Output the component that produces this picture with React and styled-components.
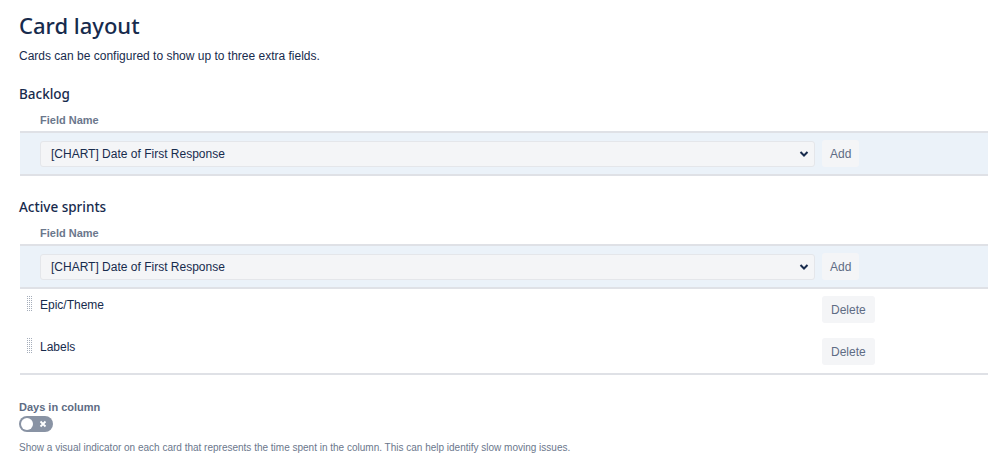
import styled, { createGlobalStyle } from 'styled-components';

const GlobalStyle = createGlobalStyle`
  body {
    margin: 0;
    background: #ffffff;
    font-family: "Liberation Sans", Arial, sans-serif;
    color: #172b4d;
  }
`;

const Page = styled.div`
  padding: 11px 11px 0 19px;
  width: 999px;
  box-sizing: border-box;
`;

const Title = styled.h1`
  margin: 0;
  font-family: "Noto Sans", "Liberation Sans", sans-serif;
  font-size: 22px;
  font-weight: 500;
  line-height: 28px;
  color: #172b4d;
`;

const Intro = styled.p`
  margin: 9px 0 0;
  font-size: 12px;
  line-height: 16px;
  color: #172b4d;
`;

const SectionTitle = styled.h2`
  margin: ${(p) => p.$top}px 0 0;
  font-family: "Noto Sans", "Liberation Sans", sans-serif;
  font-size: 13.5px;
  font-weight: 500;
  line-height: 18px;
  color: #172b4d;
`;

const ColumnHead = styled.div`
  margin: 10px 0 0 21px;
  font-size: 11px;
  font-weight: 700;
  line-height: 14px;
  color: #6b778c;
`;

const Table = styled.div`
  margin: 4px 0 0 1px;
  border-bottom: ${(p) => (p.$closed ? '2px solid #dfe1e6' : 'none')};
`;

const AddRow = styled.div`
  display: flex;
  align-items: center;
  gap: 7px;
  height: 41px;
  padding: 0 20px;
  background: #ebf2f9;
  border-top: 2px solid #dfe1e6;
  border-bottom: 2px solid #dfe1e6;
`;

const SelectBox = styled.div`
  position: relative;
  width: 775px;
  height: 26px;
  box-sizing: border-box;
  display: flex;
  align-items: center;
  padding: 0 10px;
  background: #f4f5f7;
  border: 1px solid #e4e6ea;
  border-radius: 3px;
  font-size: 12px;
  color: #172b4d;
`;

const Chevron = styled.svg`
  position: absolute;
  right: 5px;
  top: 8px;
`;

const Button = styled.button`
  height: 27px;
  padding: 0 ${(p) => p.$pad}px;
  border: none;
  border-radius: 3px;
  background: #f4f5f7;
  font-family: inherit;
  font-size: 12px;
  color: #5e6c84;
  cursor: pointer;
`;

const FieldRow = styled.div`
  display: flex;
  align-items: flex-start;
  height: 42px;
  padding: 7px 0 0 7px;
  box-sizing: border-box;
`;

const Handle = styled.svg`
  flex: none;
`;

const FieldName = styled.div`
  margin-left: 7px;
  width: 782px;
  font-size: 12px;
  line-height: 16px;
  padding-top: 1px;
  color: #172b4d;
`;

const Setting = styled.div`
  margin-top: 25px;
`;

const SettingLabel = styled.div`
  font-size: 11px;
  font-weight: 700;
  line-height: 14px;
  color: #5e6c84;
`;

const Toggle = styled.div`
  position: relative;
  margin-top: 2px;
  width: 34px;
  height: 16px;
  border-radius: 8px;
  background: #8993a4;
`;

const Knob = styled.div`
  position: absolute;
  left: 2px;
  top: 2px;
  width: 12px;
  height: 12px;
  border-radius: 50%;
  background: #ffffff;
`;

const Cross = styled.svg`
  position: absolute;
  right: 6px;
  top: 4px;
`;

const Hint = styled.p`
  margin: 9px 0 0;
  font-size: 10px;
  line-height: 14px;
  color: #6b778c;
`;

function FieldSelect() {
  return (
    <AddRow>
      <SelectBox>
        [CHART] Date of First Response
        <Chevron width="10" height="8" viewBox="0 0 10 8">
          <path d="M1.5 2 L5 5.5 L8.5 2" fill="none" stroke="#172b4d" strokeWidth="2" />
        </Chevron>
      </SelectBox>
      <Button $pad={8}>Add</Button>
    </AddRow>
  );
}

const dots = [];
for (let r = 0; r < 8; r++) {
  for (let c = 0; c < 3; c++) dots.push([c * 2, r * 2]);
}

function Field({ name }) {
  return (
    <FieldRow>
      <Handle width="6" height="16" viewBox="0 0 6 16">
        {dots.map(([x, y]) => (
          <rect key={`${x}-${y}`} x={x} y={y} width="1" height="1" fill="#a5adba" />
        ))}
      </Handle>
      <FieldName>{name}</FieldName>
      <Button $pad={9}>Delete</Button>
    </FieldRow>
  );
}

export default function App() {
  return (
    <Page>
      <GlobalStyle />
      <Title>Card layout</Title>
      <Intro>Cards can be configured to show up to three extra fields.</Intro>

      <SectionTitle $top={21}>Backlog</SectionTitle>
      <ColumnHead>Field Name</ColumnHead>
      <Table>
        <FieldSelect />
      </Table>

      <SectionTitle $top={22}>Active sprints</SectionTitle>
      <ColumnHead>Field Name</ColumnHead>
      <Table $closed>
        <FieldSelect />
        <Field name="Epic/Theme" />
        <Field name="Labels" />
      </Table>

      <Setting>
        <SettingLabel>Days in column</SettingLabel>
        <Toggle>
          <Knob />
          <Cross width="8" height="8" viewBox="0 0 8 8">
            <path d="M1.5 1.5 L6.5 6.5 M6.5 1.5 L1.5 6.5" stroke="#ffffff" strokeWidth="1.8" />
          </Cross>
        </Toggle>
        <Hint>
          Show a visual indicator on each card that represents the time spent in the column. This can help identify slow moving issues.
        </Hint>
      </Setting>
    </Page>
  );
}
